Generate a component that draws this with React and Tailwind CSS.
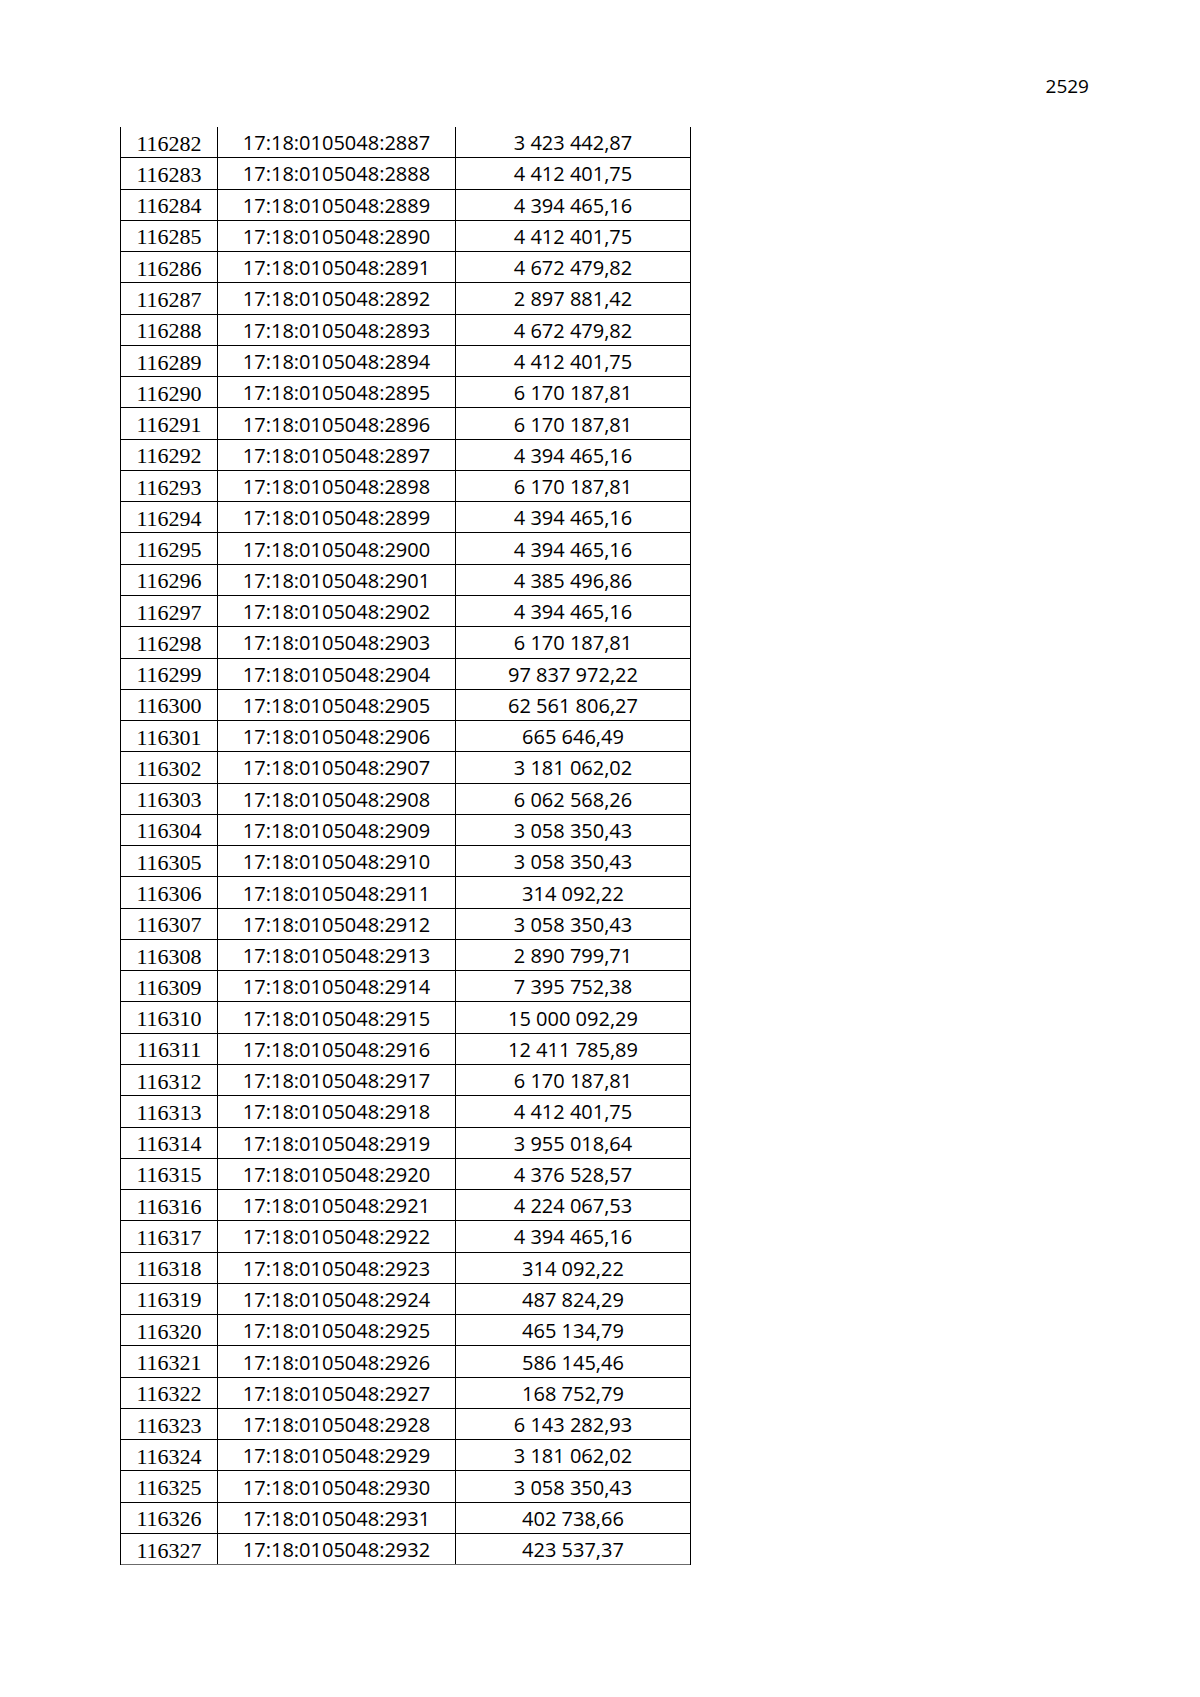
import React from "react";

const values = [
  "3 423 442,87","4 412 401,75","4 394 465,16","4 412 401,75","4 672 479,82","2 897 881,42","4 672 479,82","4 412 401,75","6 170 187,81","6 170 187,81",
  "4 394 465,16","6 170 187,81","4 394 465,16","4 394 465,16","4 385 496,86","4 394 465,16","6 170 187,81","97 837 972,22","62 561 806,27","665 646,49",
  "3 181 062,02","6 062 568,26","3 058 350,43","3 058 350,43","314 092,22","3 058 350,43","2 890 799,71","7 395 752,38","15 000 092,29","12 411 785,89",
  "6 170 187,81","4 412 401,75","3 955 018,64","4 376 528,57","4 224 067,53","4 394 465,16","314 092,22","487 824,29","465 134,79","586 145,46",
  "168 752,79","6 143 282,93","3 181 062,02","3 058 350,43","402 738,66","423 537,37"
];

const rows = values.map((v, i) => ({
  num: String(116282 + i),
  cad: "17:18:0105048:" + String(2887 + i),
  val: v,
}));

export default function App() {
  return (
    <div className="w-[1200px] h-[1697px] bg-white text-black overflow-hidden">
      <div className="flex justify-end pr-[111px] pt-[74px] h-[100px] text-[19px] leading-[24px] font-['Open_Sans',sans-serif]">
        2529
      </div>
      <div className="ml-[120px] mt-[27px] w-[571px] border-l border-r border-black">
        {rows.map((r, i) => (
          <div
            key={r.num}
            className={
              i === rows.length - 1
                ? "flex h-[31.28px] border-b border-[#6b6b6b]"
                : "flex h-[31.28px] border-b border-black"
            }
          >
            <div className="w-[97px] shrink-0 border-r border-black flex items-center justify-center pt-[2px] text-[22px] font-['Liberation_Serif',serif]">
              {r.num}
            </div>
            <div className="w-[238px] shrink-0 border-r border-black flex items-center justify-center pt-[2px] text-[20px] font-['Open_Sans',sans-serif]">
              {r.cad}
            </div>
            <div className="flex-1 flex items-center justify-center pt-[2px] text-[20px] font-['Open_Sans',sans-serif]">
              {r.val}
            </div>
          </div>
        ))}
      </div>
    </div>
  );
}
